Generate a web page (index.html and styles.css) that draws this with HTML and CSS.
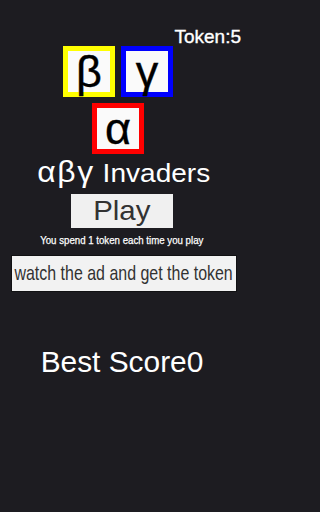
FILE: index.html
```html
<!DOCTYPE html>
<html>
<head>
<meta charset="utf-8">
<link rel="stylesheet" href="styles.css">
</head>
<body>
<div class="screen">
  <div class="header"><span class="token">Token:5</span></div>
  <div class="tiles">
    <div class="tile-row">
      <div class="tile tile-yellow">β</div>
      <div class="tile tile-blue">γ</div>
    </div>
    <div class="tile tile-red">α</div>
  </div>
  <h1 class="title"><span class="title-text"><span class="greek">αβγ</span> Invaders</span></h1>
  <div class="play-btn"><span class="play-text">Play</span></div>
  <p class="note"><span class="note-text">You spend 1 token each time you play</span></p>
  <div class="ad-btn"><span class="ad-text">watch the ad and get the token</span></div>
  <p class="best"><span class="best-text">Best Score0</span></p>
</div>
</body>
</html>
```
FILE: styles.css
```css
html, body {
  margin: 0;
  padding: 0;
  background: #1d1c21;
}
.screen {
  width: 244px;
  height: 512px;
  display: flex;
  flex-direction: column;
  align-items: center;
  font-family: "Liberation Sans", Arial, sans-serif;
  color: #ffffff;
  overflow: hidden;
}
.header {
  align-self: stretch;
  display: flex;
  justify-content: flex-end;
  padding: 27px 3px 0 0;
  height: 19px;
}
.token {
  font-size: 19px;
  line-height: 19px;
  color: #ffffff;
  -webkit-text-stroke: 0.35px #ffffff;
}
.tiles {
  display: flex;
  flex-direction: column;
  align-items: center;
  gap: 6px;
  margin-right: 8px;
}
.tile-row {
  display: flex;
  gap: 6px;
}
.tile {
  box-sizing: border-box;
  width: 52px;
  height: 51px;
  border: 5px solid;
  background: #fafafa;
  color: #000000;
  font-size: 45px;
  line-height: 41px;
  text-align: center;
  -webkit-text-stroke: 0.4px #000000;
}
.tile-yellow { border-color: #ffff00; }
.tile-blue { border-color: #0000ff; }
.tile-red { border-color: #ff0000; }
.title {
  margin: 5px 0 0 4px;
  font-weight: normal;
  font-size: 25.5px;
  line-height: 26px;
  white-space: nowrap;
}
.title-text {
  display: inline-block;
  transform: scaleX(1.1);
}
.greek {
  font-size: 29px;
  letter-spacing: 1.5px;
}
.play-btn {
  margin-top: 8px;
  width: 102px;
  height: 34px;
  display: flex;
  justify-content: center;
  background: #f0f0f0;
  color: #323232;
  font-size: 27.5px;
  line-height: 34px;
}
.play-text {
  display: inline-block;
  transform: scaleX(1.07);
}
.note {
  margin: 6px 0 0 0;
  font-size: 11px;
  line-height: 12px;
  white-space: nowrap;
  -webkit-text-stroke: 0.25px #ffffff;
}
.note-text {
  display: inline-block;
  transform: scaleX(0.88);
}
.ad-btn {
  margin: 10px 0 0 4px;
  width: 224px;
  height: 35px;
  box-sizing: border-box;
  padding-bottom: 2px;
  display: flex;
  justify-content: center;
  background: #f2f2f2;
  box-shadow: 0 0 0 1px #111113;
  color: #323232;
  font-size: 21px;
  line-height: 33px;
  white-space: nowrap;
}
.ad-text {
  display: inline-block;
  flex: none;
  transform: scaleX(0.76);
}
.best {
  margin: 54px 0 0 0;
  font-size: 29px;
  line-height: 34px;
  white-space: nowrap;
}
.best-text {
  display: inline-block;
  transform: scaleX(1.03);
}
```
